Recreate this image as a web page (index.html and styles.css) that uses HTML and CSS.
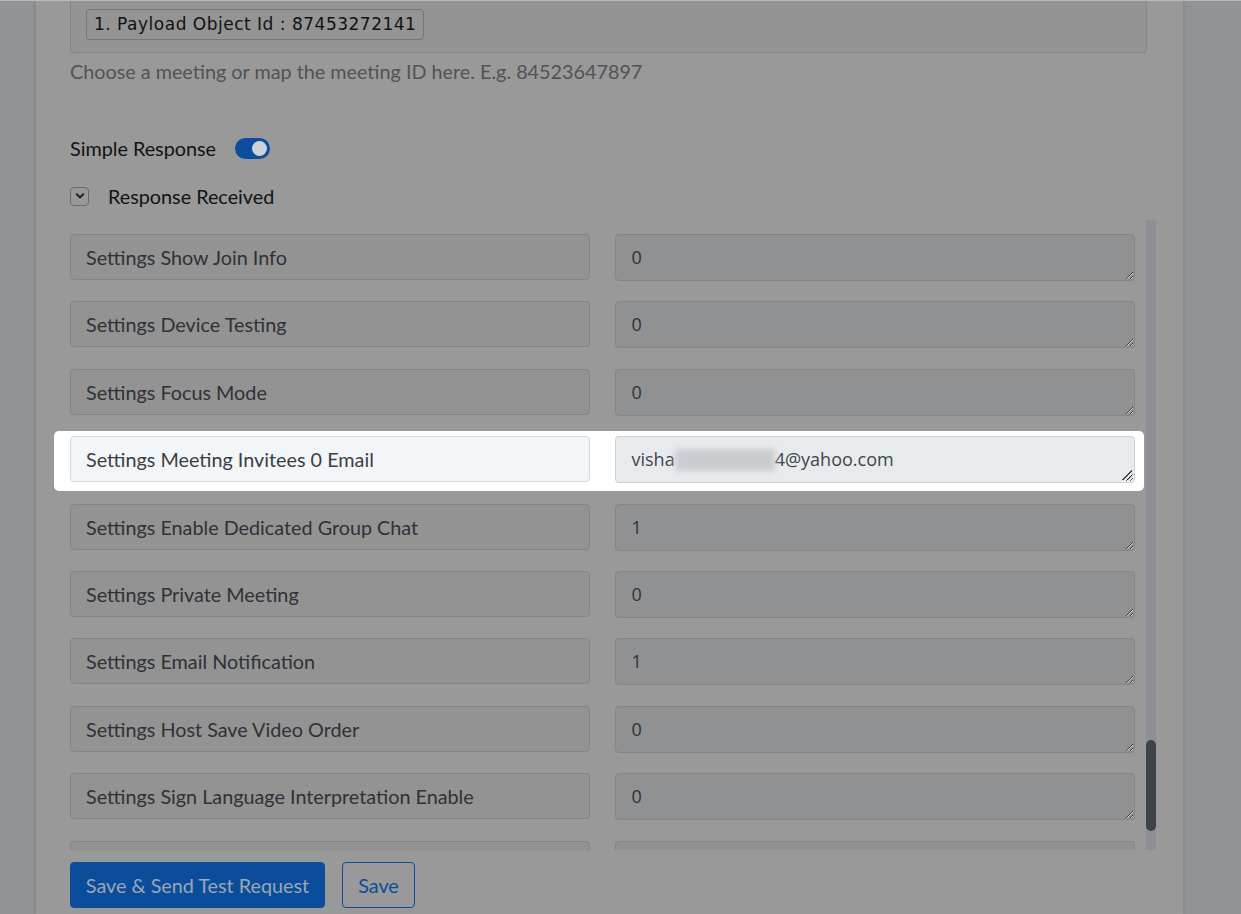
FILE: index.html
```html
<!DOCTYPE html>
<html>
<head>
<meta charset="utf-8">
<link rel="stylesheet" href="styles.css">
</head>
<body>
<div class="page">
  <div class="panel">
    <div class="mapbox">
      <span class="tag">1. Payload Object Id : 87453272141</span>
    </div>
    <p class="help">Choose a meeting or map the meeting ID here. E.g. 84523647897</p>

    <div class="simple">
      <span>Simple Response</span>
      <span class="toggle"><span class="knob"></span></span>
    </div>

    <div class="received">
      <span class="chev"><svg width="12" height="12" viewBox="0 0 12 12"><path d="M2.8 4.3 L6 7.5 L9.2 4.3" fill="none" stroke="#1f2226" stroke-width="2" stroke-linecap="round" stroke-linejoin="round"/></svg></span>
      <span>Response Received</span>
    </div>

    <div class="listwrap">
      <div class="list">
        <div class="row"><div class="key">Settings Show Join Info</div><textarea class="val" readonly>0</textarea></div>
        <div class="row"><div class="key">Settings Device Testing</div><textarea class="val" readonly>0</textarea></div>
        <div class="row"><div class="key">Settings Focus Mode</div><textarea class="val" readonly>0</textarea></div>
        <div class="row hl"><div class="key">Settings Meeting Invitees 0 Email</div><div class="val valdiv">visha<span class="blur"></span>4@yahoo.com<span class="grip"></span></div></div>
        <div class="row"><div class="key">Settings Enable Dedicated Group Chat</div><textarea class="val" readonly>1</textarea></div>
        <div class="row"><div class="key">Settings Private Meeting</div><textarea class="val" readonly>0</textarea></div>
        <div class="row"><div class="key">Settings Email Notification</div><textarea class="val" readonly>1</textarea></div>
        <div class="row"><div class="key">Settings Host Save Video Order</div><textarea class="val" readonly>0</textarea></div>
        <div class="row"><div class="key">Settings Sign Language Interpretation Enable</div><textarea class="val" readonly>0</textarea></div>
        <div class="row"><div class="key"></div><textarea class="val" readonly></textarea></div>
      </div>
      <div class="track"><div class="thumb"></div></div>
    </div>

    <div class="actions">
      <button class="btn primary">Save &amp; Send Test Request</button>
      <button class="btn outline">Save</button>
    </div>
  </div>
</div>
</body>
</html>
```
FILE: styles.css
```css
* { box-sizing: border-box; }
html, body { margin: 0; padding: 0; }
body {
  background: #929396;
  font-family: Lato, "Noto Sans", sans-serif;
  border-top: 1px solid #b9babc;
  height: 914px;
  overflow: hidden;
}
.page {
  padding-left: 36px;
  width: 1183px;
}
.panel {
  background: #999999;
  height: 913px;
  padding: 0 27px 0 34px;
  box-shadow: -2px 0 2px rgba(0,0,0,0.08), 2px 0 2px rgba(0,0,0,0.05);
}
.mapbox {
  width: 1077px;
  height: 52px;
  border: 1px solid #868686;
  border-top: none;
  border-radius: 0 0 4px 4px;
  background: #949495;
  padding: 8px 0 0 15px;
}
.tag {
  display: inline-block;
  font-family: "DejaVu Sans", Verdana, sans-serif;
  font-size: 17px;
  color: #121212;
  height: 31px;
  line-height: 29px;
  padding: 0 7px 0 7px;
  border: 1px solid #767676;
  border-radius: 4px;
  letter-spacing: 0.5px;
}
.help {
  margin: 6px 0 0 0;
  font-size: 19.8px;
  line-height: 24px;
  color: #505357;
}
.simple {
  margin-top: 53px;
  display: flex;
  align-items: center;
  gap: 19px;
  font-size: 19.8px;
  color: #121314;
  height: 24px;
}
.toggle {
  width: 35px;
  height: 21px;
  border-radius: 11px;
  background: #0c4e9d;
  position: relative;
}
.knob {
  position: absolute;
  right: 3px;
  top: 3px;
  width: 15px;
  height: 15px;
  border-radius: 50%;
  background: #cdd2d9;
}
.received {
  margin-top: 24px;
  display: flex;
  align-items: center;
  gap: 19px;
  font-size: 19.8px;
  color: #121314;
  height: 24px;
}
.chev {
  width: 19px;
  height: 19px;
  border: 1px solid #6c6c6c;
  border-radius: 4px;
  display: flex;
  align-items: center;
  justify-content: center;
}
.listwrap {
  margin-top: 12px;
  margin-left: -16px;
  display: flex;
  gap: 2px;
  height: 630px;
}
.list {
  width: 1090px;
  overflow: hidden;
  display: flex;
  flex-direction: column;
  gap: 20.4px;
  padding: 14px 9px 0 16px;
}
.row {
  display: flex;
  gap: 25px;
  flex: none;
  position: relative;
  z-index: 0;
}
.key {
  width: 520px;
  height: 46px;
  border: 1px solid #858585;
  border-radius: 4px;
  background: #939394;
  font-size: 19.8px;
  color: #2e3236;
  padding: 0 15px;
  line-height: 44px;
  white-space: nowrap;
}
.val {
  width: 521px;
  height: 47px;
  border: 1px solid #858585;
  border-radius: 4px;
  background: #909193;
  font-family: "Open Sans", "Noto Sans", sans-serif;
  font-size: 18px;
  color: #2e3236;
  padding: 10px 16px;
  line-height: 24px;
  resize: vertical;
  overflow: hidden;
  margin: 0;
  outline: none;
  white-space: nowrap;
}
.row.hl::before {
  content: "";
  position: absolute;
  left: -16px;
  top: -5px;
  width: 1090px;
  height: 60px;
  background: #ffffff;
  border-radius: 5px;
  z-index: -1;
}
.row.hl .key {
  background: #f3f6f9;
  border-color: #d3d8de;
  color: #3a3f45;
}
.row.hl .val {
  background: #e8ebee;
  border-color: #cdd1d6;
  color: #40454b;
}
.valdiv {
  position: relative;
}
.blur {
  display: inline-block;
  width: 100px;
  height: 22px;
  vertical-align: -5px;
  background: #c9ccd0;
  filter: blur(3px);
}
.grip {
  position: absolute;
  right: 2px;
  bottom: 2px;
  width: 10px;
  height: 10px;
  background:
    linear-gradient(135deg, transparent 45%, #444 45%, #444 55%, transparent 55%) 0 0/10px 10px no-repeat;
}
.grip::after {
  content: "";
  position: absolute;
  right: 0;
  bottom: 0;
  width: 5px;
  height: 5px;
  background: linear-gradient(135deg, transparent 40%, #444 40%, #444 60%, transparent 60%);
}
.track {
  width: 10px;
  height: 630px;
  background: #8d9196;
  padding-top: 520px;
}
.thumb {
  width: 10px;
  height: 91px;
  border-radius: 5px;
  background: #3e4349;
}
.actions {
  margin-top: 12px;
  display: flex;
  gap: 17px;
}
.btn {
  height: 46px;
  border-radius: 4px;
  font-family: Lato, "Noto Sans", sans-serif;
  font-size: 19.8px;
  padding: 0 4px;
  white-space: nowrap;
}
.primary {
  width: 255px;
  background: #0b4d9b;
  border: 1px solid #0b4d9b;
  color: #9ba6b7;
}
.outline {
  width: 73px;
  background: transparent;
  border: 1px solid #0b4d9b;
  color: #0b4d9b;
}
```
